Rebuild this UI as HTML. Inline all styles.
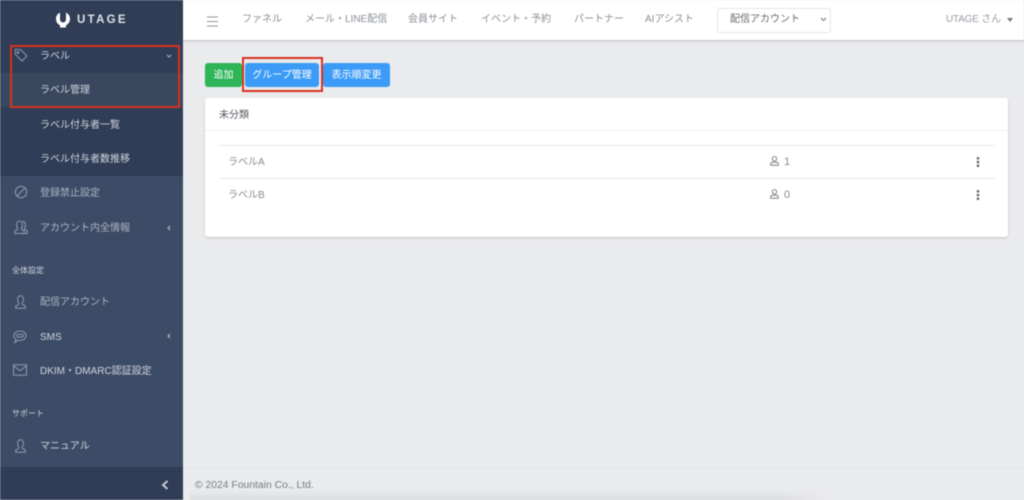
<!DOCTYPE html>
<html lang="ja">
<head>
<meta charset="utf-8">
<title>UTAGE</title>
<style>
*{box-sizing:border-box;margin:0;padding:0}
html,body{width:1024px;height:500px;overflow:hidden;background:#eaebed}
body{position:relative;font-family:"Liberation Sans","Noto Sans CJK JP",sans-serif;font-size:10px}
#wrap{position:absolute;left:0;top:0;width:1024px;height:500px;filter:blur(.4px)}
.a{position:absolute;white-space:nowrap}
svg{position:absolute;fill:none;overflow:visible}
.side{position:absolute;left:0;top:0;width:183px;height:500px;background:#3d4c66}
.m{position:absolute;left:40px;white-space:nowrap;color:#cfd5de;font-size:10px;line-height:14px}
.d{color:#aab3c2}
.h{position:absolute;left:12px;color:#cdd3dc;font-size:8px;line-height:12px;white-space:nowrap}
.nav{position:absolute;top:13px;color:#8a8f96;font-size:10px;line-height:14px;white-space:nowrap}
.ic{stroke:#8f9bb0;stroke-width:1}
.btn{position:absolute;top:63px;height:24px;border-radius:3px;color:#fff;font-size:10px;line-height:24px;text-align:center;white-space:nowrap}
</style>
</head>
<body>
<div id="wrap">
<div class="side"></div>
<div class="a" style="left:0;top:0;width:183px;height:73px;background:#2f3d56"></div>
<div class="a" style="left:0;top:73px;width:183px;height:34px;background:#3a485f"></div>
<div class="a" style="left:0;top:107px;width:183px;height:69px;background:#2f3d56"></div>
<div class="a" style="left:0;top:467px;width:183px;height:33px;background:#2f3d56"></div>

<svg style="left:55px;top:12px" width="16" height="16" viewBox="0 0 16 16"><path d="M5 .6v6.900a3 3 0 0 0 6 0V.6c2.300 1 4 3.200 4 6.200 0 3.200-1.700 5.400-4 6.500v2.200H5v-2.200C2.700 12.200 1 10 1 6.800 1 3.800 2.700 1.600 5 .6z" fill="#fff"/></svg>
<div class="a" style="left:77px;top:12px;font-size:11.500px;line-height:16px;font-weight:bold;color:#dfe3e9;letter-spacing:2.300px">UTAGE</div>

<svg class="ic" style="left:14px;top:48px" width="14" height="14" viewBox="0 0 14 14"><path d="M1 1.500h5.500l6.500 6.500-5 5-6.500-6.500z"/><circle cx="4" cy="4.500" r=".9"/></svg>
<div class="m" style="top:50px">ラベル</div>
<svg style="left:166px;top:54px" width="6" height="4" viewBox="0 0 6 4"><path d="M1 1l2 2 2-2" stroke="#aab3c2" stroke-width="1"/></svg>
<div class="m" style="top:84px">ラベル管理</div>
<div class="m" style="top:119px">ラベル付与者一覧</div>
<div class="m" style="top:153px">ラベル付与者数推移</div>

<svg class="ic" style="left:14px;top:185px" width="14" height="14" viewBox="0 0 14 14"><circle cx="7" cy="7" r="5.700"/><path d="M3 11l8-8"/></svg>
<div class="m d" style="top:187px">登録禁止設定</div>
<svg class="ic" style="left:14px;top:220px" width="14" height="14" viewBox="0 0 14 14"><path d="M.8 13.500v-2.700l2.700-1.300V8c-.7-.8-1-1.800-1-3C2.500 2.500 3.800 1 5.500 1s3 1.500 3 4c0 1.200-.3 2.200-1 3v1.500l2.700 1.300v2.700z"/><path d="M8.500 1.200c1.800 0 2.900 1.500 2.900 3.800 0 1.200-.3 2.200-.9 3v1.500l2.700 1.300v2.700h-2.500"/></svg>
<div class="m d" style="top:222px">アカウント内全情報</div>
<svg style="left:167px;top:225px" width="4" height="6" viewBox="0 0 4 6"><path d="M3 1L1 3l2 2" stroke="#bcc4d0" stroke-width="1"/></svg>

<div class="h" style="top:265px">全体設定</div>
<svg class="ic" style="left:15px;top:295px" width="11" height="14" viewBox="0 0 11 14"><path d="M.7 13.300v-2.300l3-1.500V8C3 7.200 2.600 6 2.600 4.500 2.600 2.300 3.800.8 5.500.8s2.900 1.500 2.900 3.700C8.400 6 8 7.200 7.300 8v1.500l3 1.500v2.300z"/></svg>
<div class="m d" style="top:296px">配信アカウント</div>
<svg class="ic" style="left:13px;top:330px" width="14" height="14" viewBox="0 0 14 14"><path d="M7 1c3.400 0 6 1.900 6 4.700s-2.600 4.700-6 4.700c-.7 0-1.300-.1-1.900-.2L1.800 12.500l1.200-2.900C1.700 8.700 1 7.300 1 5.700 1 2.900 3.600 1 7 1z"/><rect x="3.800" y="4.400" width="6.400" height="2.600" rx="1.300"/></svg>
<div class="m" style="top:331px;color:#cfd5de">SMS</div>
<svg style="left:167px;top:333px" width="4" height="6" viewBox="0 0 4 6"><path d="M3 1L1 3l2 2" stroke="#bcc4d0" stroke-width="1"/></svg>
<svg class="ic" style="left:13px;top:364px" width="14" height="12" viewBox="0 0 14 12"><rect x=".5" y=".8" width="13" height="10.400"/><path d="M.5 1.800l6.500 5 6.500-5"/></svg>
<div class="m" style="top:365px">DKIM・DMARC認証設定</div>

<div class="h" style="top:408px">サポート</div>
<svg class="ic" style="left:15px;top:439px" width="11" height="14" viewBox="0 0 11 14"><path d="M.7 13.300v-2.300l3-1.500V8C3 7.200 2.600 6 2.600 4.500 2.600 2.300 3.800.8 5.500.8s2.900 1.500 2.900 3.700C8.400 6 8 7.200 7.300 8v1.500l3 1.500v2.300z"/></svg>
<div class="m" style="top:440px">マニュアル</div>
<svg style="left:161px;top:480px" width="8" height="10" viewBox="0 0 8 10"><path d="M6.500 1L2 5l4.500 4" stroke="#c4cbd6" stroke-width="2"/></svg>

<div class="a" style="left:10px;top:45px;width:170px;height:63px;border:2px solid #d7321f"></div>

<!-- topbar -->
<div class="a" style="left:183px;top:0;width:841px;height:40px;background:#fff;box-shadow:0 1px 2px rgba(0,0,0,.2)"></div>
<svg style="left:207px;top:16px" width="11" height="11" viewBox="0 0 11 11"><path d="M0 1h11M0 5.500h11M0 10h11" stroke="#8f949a" stroke-width="1"/></svg>
<div class="nav" style="left:242px">ファネル</div>
<div class="nav" style="left:305px">メール・LINE配信</div>
<div class="nav" style="left:408px">会員サイト</div>
<div class="nav" style="left:481px">イベント・予約</div>
<div class="nav" style="left:574px">パートナー</div>
<div class="nav" style="left:645px">AIアシスト</div>
<div class="a" style="left:717px;top:8px;width:114px;height:25px;border:1px solid #e3e5e8;border-radius:3px;background:#fff"></div>
<div class="a" style="left:730px;top:13px;color:#666b72;font-size:10px;line-height:14px">配信アカウント</div>
<svg style="left:820px;top:17px" width="7" height="5" viewBox="0 0 7 5"><path d="M1 1l2.500 2.500L6 1" stroke="#777" stroke-width="1"/></svg>
<div class="nav" style="left:946px;color:#999da3;letter-spacing:-.2px">UTAGE さん</div>
<div class="a" style="left:1007px;top:18px;width:0;height:0;border:3px solid transparent;border-top:4px solid #777;border-bottom:0"></div>

<!-- buttons -->
<div class="btn" style="left:205px;width:37px;background:#2db557;padding-top:1px">追加</div>
<div class="btn" style="left:245px;width:74px;background:#3b9bf6;padding-top:1px">グループ管理</div>
<div class="btn" style="left:323px;width:67px;background:#3b9bf6;padding-top:1px">表示順変更</div>
<div class="a" style="left:242px;top:57px;width:81px;height:35px;border:2px solid #d7321f"></div>

<!-- card -->
<div class="a" style="left:205px;top:98px;width:803px;height:139px;background:#fff;border-radius:3px;box-shadow:0 1px 2px rgba(0,0,0,.18)"></div>
<div class="a" style="left:219px;top:109px;font-size:10px;line-height:14px;color:#555a60">未分類</div>
<div class="a" style="left:205px;top:130px;width:803px;height:1px;background:#eceef0"></div>
<div class="a" style="left:219px;top:145px;width:776px;height:1px;background:#e6e8ea"></div>
<div class="a" style="left:219px;top:178px;width:776px;height:1px;background:#e6e8ea"></div>
<div class="a" style="left:228px;top:156px;font-size:10px;line-height:14px;color:#85898f">ラベルA</div>
<div class="a" style="left:228px;top:189px;font-size:10px;line-height:14px;color:#85898f">ラベルB</div>

<svg style="left:770px;top:156px" width="9" height="10" viewBox="0 0 9 10"><circle cx="4.500" cy="2.800" r="2.200" stroke="#7d8188"/><path d="M.7 9.300V8c0-1.100 1-1.800 2-1.800h3.600c1 0 2 .7 2 1.800v1.300z" stroke="#7d8188"/></svg>
<div class="a" style="left:784px;top:155px;font-size:11px;line-height:14px;color:#85898f">1</div>
<svg style="left:770px;top:189px" width="9" height="10" viewBox="0 0 9 10"><circle cx="4.500" cy="2.800" r="2.200" stroke="#7d8188"/><path d="M.7 9.300V8c0-1.100 1-1.800 2-1.800h3.600c1 0 2 .7 2 1.800v1.300z" stroke="#7d8188"/></svg>
<div class="a" style="left:784px;top:188px;font-size:11px;line-height:14px;color:#85898f">0</div>

<svg style="left:976px;top:157px" width="4" height="10" viewBox="0 0 4 10"><g fill="#5e6268"><circle cx="2" cy="1.300" r="1.300"/><circle cx="2" cy="5" r="1.300"/><circle cx="2" cy="8.700" r="1.300"/></g></svg>
<svg style="left:976px;top:190px" width="4" height="10" viewBox="0 0 4 10"><g fill="#5e6268"><circle cx="2" cy="1.300" r="1.300"/><circle cx="2" cy="5" r="1.300"/><circle cx="2" cy="8.700" r="1.300"/></g></svg>

<!-- footer -->
<div class="a" style="left:183px;top:467px;width:841px;height:1px;background:#e1e3e6"></div>
<div class="a" style="left:195px;top:479px;font-size:10.300px;line-height:14px;letter-spacing:.03px;color:#777b81">© 2024 Fountain Co., Ltd.</div>
<div class="a" style="left:190px;top:490px;width:640px;height:10px;background:linear-gradient(to bottom,rgba(215,217,220,0),rgba(215,217,220,.8));-webkit-mask-image:linear-gradient(to right,#000 92%,transparent)"></div>
</div>
</body>
</html>
